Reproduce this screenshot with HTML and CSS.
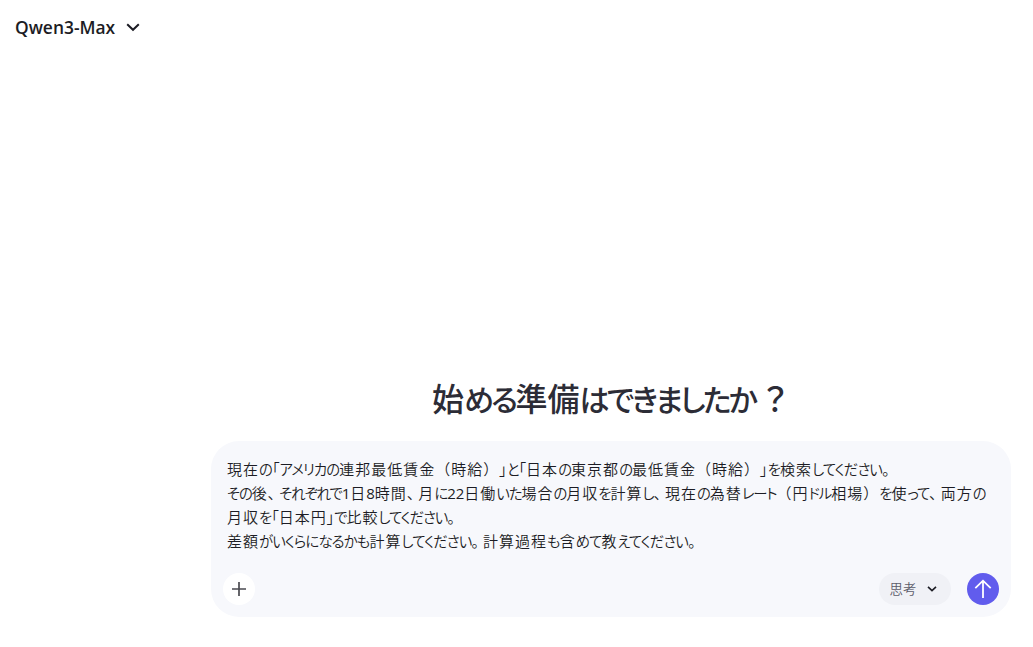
FILE: index.html
```
<!DOCTYPE html>
<html lang="ja">
  <head>
    <meta charset="UTF-8" />
    <meta name="viewport" content="width=device-width, initial-scale=1.0" />
    <title>Qwen3-Max</title>
    <link rel="stylesheet" href="styles.css">
  </head>
  <body>
    <header class="header">
      <div class="model-select">
        <span class="model-name">Qwen3-Max</span>
        <svg class="model-chevron" viewBox="0 0 14 10" fill="none" stroke="currentColor" stroke-width="2">
          <path d="M1.2 2.2 7 7.8l5.8-5.6" />
        </svg>
      </div>
    </header>

    <main class="main">
      <h1 class="title">始<span class="kana">める</span>準備<span class="kana">はできましたか</span><span class="question">？</span></h1>

      <div class="prompt-box">
        <div class="prompt-text">
          <p>現在<span class="kana">の</span><span class="mark">「</span><span class="kana">アメリカの</span>連邦最低賃金（時給）<span class="mark">」</span><span class="kana">と</span><span class="mark">「</span>日本<span class="kana">の</span>東京都<span class="kana">の</span>最低賃金（時給）<span class="mark">」</span><span class="kana">を</span>検索<span class="kana">してください</span><span class="stop">。</span></p>
          <p class="compact"><span class="kana">その</span>後<span class="stop">、</span><span class="kana">それぞれで</span><span class="num">1</span>日<span class="num">8</span>時間<span class="stop">、</span>月<span class="kana">に</span><span class="num">22</span>日働<span class="kana">いた</span>場合<span class="kana">の</span>月収<span class="kana">を</span>計算<span class="kana">し</span><span class="stop">、</span>現在<span class="kana">の</span>為替<span class="kana">レート</span>（円<span class="kana">ドル</span>相場）<span class="kana">を</span>使<span class="kana">って</span><span class="stop">、</span>両方<span class="kana">の</span><br>月収<span class="kana">を</span><span class="mark">「</span>日本円<span class="mark">」</span><span class="kana">で</span>比較<span class="kana">してください</span><span class="stop">。</span></p>
          <p>差額<span class="kana">がいくらになるかも</span>計算<span class="kana">してください</span><span class="stop">。</span>計算過程<span class="kana">も</span>含<span class="kana">めて</span>教<span class="kana">えてください</span><span class="stop">。</span></p>
        </div>

        <div class="toolbar">
          <button class="add-btn" aria-label="追加">
            <svg width="16" height="16" viewBox="0 0 16 16" fill="none" stroke="currentColor" stroke-width="1.7">
              <path d="M8 1v14M1 8h14" />
            </svg>
          </button>
          <div class="actions">
            <button class="mode-btn">
              思考
              <svg width="10" height="8" viewBox="0 0 10 8" fill="none" stroke="currentColor" stroke-width="1.6">
                <path d="M1 1.8 5 5.6l4-3.8" />
              </svg>
            </button>
            <button class="send-btn" aria-label="送信">
              <svg width="18" height="20" viewBox="0 0 18 20" fill="none" stroke="currentColor" stroke-width="1.8">
                <path d="M9 19V2M1.3 9.2 9 1.7l7.7 7.5" />
              </svg>
            </button>
          </div>
        </div>
      </div>
    </main>
  </body>
</html>
```

FILE: styles.css
```
* {
  margin: 0;
  box-sizing: border-box;
}

body {
  height: 647px;
  overflow: hidden;
  background-color: #ffffff;
  color: #1c1c24;
  font-family: "Noto Sans CJK JP", sans-serif;
  text-spacing-trim: space-all;
}

.header {
  height: 54px;
  padding: 0 15px;
  display: flex;
  align-items: center;
}

.model-select {
  display: flex;
  align-items: center;
  gap: 11px;
}

.model-name {
  font-family: "Open Sans", "Noto Sans", sans-serif;
  font-size: 17.4px;
  font-weight: 600;
  line-height: 24px;
}

.model-chevron {
  width: 14px;
  height: 10px;
}

.main {
  width: 800px;
  margin-left: 211px;
  padding-top: 319px;
}

.title {
  height: 48px;
  margin-bottom: 20px;
  padding-left: 221px;
  color: #2c2c36;
  font-size: 32px;
  font-weight: 500;
  line-height: 48px;
  white-space: nowrap;
}

.title .kana {
  font-size: 30px;
  line-height: 1;
  letter-spacing: -2.7px;
}

.question {
  margin-left: 4px;
}

.kana,
.mark,
.stop {
  font-feature-settings: "palt";
}

.prompt-box {
  height: 176px;
  padding: 16px 12px 12px 16px;
  border-radius: 28px;
  background-color: #f7f8fc;
  display: flex;
  flex-direction: column;
  justify-content: space-between;
}

.prompt-text {
  font-size: 15px;
  font-weight: 350;
  line-height: 24px;
  letter-spacing: 1px;
  white-space: nowrap;
}

.prompt-text .kana {
  font-size: 14.4px;
  line-height: 1;
  letter-spacing: -0.9px;
}

.prompt-text .compact .kana {
  letter-spacing: -1.1px;
}

.mark {
  letter-spacing: 0;
}

.stop {
  letter-spacing: 4px;
}

.num {
  font-family: "Open Sans", sans-serif;
  font-weight: 400;
  line-height: 1;
  letter-spacing: 0;
}

.toolbar {
  margin-left: -4px;
  display: flex;
  justify-content: space-between;
  align-items: center;
}

.actions {
  display: flex;
  gap: 16px;
}

.add-btn,
.mode-btn,
.send-btn {
  height: 32px;
  padding: 0;
  border: none;
  display: flex;
  align-items: center;
  justify-content: center;
  cursor: pointer;
}

.add-btn {
  width: 32px;
  border-radius: 50%;
  background-color: #ffffff;
  color: #4a4a50;
}

.mode-btn {
  width: 72px;
  padding: 0 4px 2px 0;
  gap: 10px;
  border-radius: 16px;
  background-color: #f0f1f6;
  color: #5c5c69;
  font-family: inherit;
  font-size: 13.5px;
  font-weight: 350;
  line-height: 30px;
}

.mode-btn svg {
  margin-top: 2px;
  color: #1c1c24;
}

.send-btn {
  width: 32px;
  border-radius: 50%;
  background-color: #615ced;
  color: #ffffff;
}
```
